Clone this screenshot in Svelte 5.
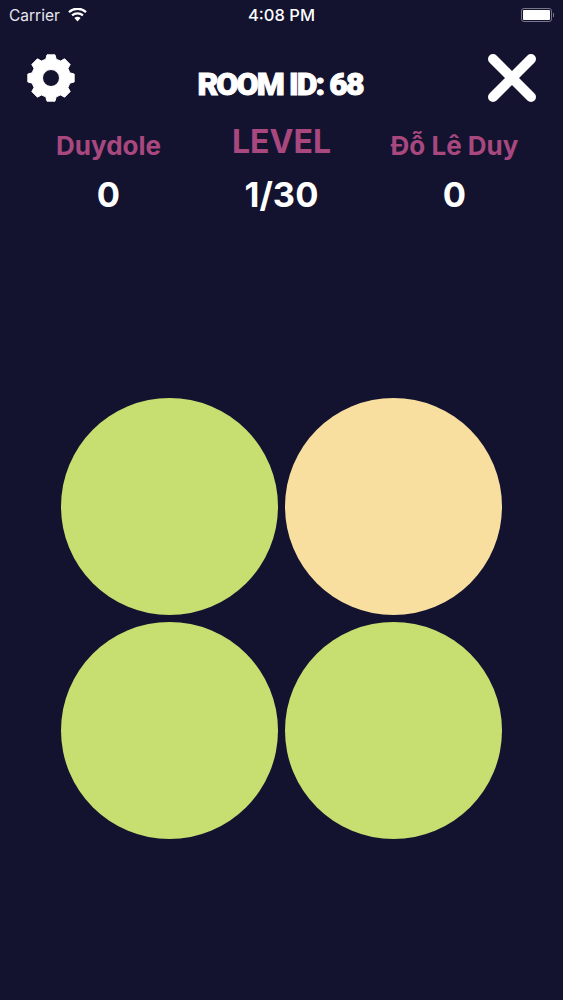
<script>
  const players = [
    { name: 'Duydole', score: 0 },
    { name: 'Đỗ Lê Duy', score: 0 }
  ];
  const tiles = [false, true, false, false];

  // 8 tooth gear outline, centred on 24,24
  function gearPath(teeth, outer, root) {
    const step = (Math.PI * 2) / teeth;
    const pts = [];
    for (let i = 0; i < teeth; i++) {
      const a = i * step - Math.PI / 2;
      for (const [r, off] of [[root, -0.27], [outer, -0.17], [outer, 0.17], [root, 0.27]]) {
        pts.push(`${(24 + r * Math.cos(a + off)).toFixed(2)} ${(24 + r * Math.sin(a + off)).toFixed(2)}`);
      }
    }
    return 'M' + pts.join('L') + 'Z';
  }

  const gear = gearPath(8, 23.5, 19.5) + 'M24 15.500a8.500 8.500 0 1 0 0 17 8.500 8.500 0 0 0 0-17z';
</script>

<div class="screen">
  <div class="status">
    <div class="carrier">
      <span>Carrier</span>
      <svg width="19" height="14" viewBox="0 0 19 14">
        <path d="M9.500 13.500 6.400 10a4.400 4.400 0 0 1 6.200 0z" fill="#fff" />
        <path d="M4.800 8.300a7 7 0 0 1 9.400 0l1.500-1.700a9.300 9.300 0 0 0-12.400 0z" fill="#fff" />
        <path d="M1.700 4.900a11.600 11.600 0 0 1 15.600 0l1.500-1.700a13.800 13.800 0 0 0-18.600 0z" fill="#fff" />
      </svg>
    </div>
    <span class="time">4:08 PM</span>
    <div class="battery">
      <div class="cell"></div>
      <div class="nub"></div>
    </div>
  </div>

  <header>
    <svg class="gear" width="48" height="48" viewBox="0 0 48 48">
      <path fill="#fff" fill-rule="evenodd" stroke="#fff" stroke-width="1" stroke-linejoin="round" d={gear} />
    </svg>
    <h1>ROOM ID: 68</h1>
    <svg class="close" width="48" height="48" viewBox="0 0 48 48">
      <path d="M5 5 43 43M43 5 5 43" stroke="#fff" stroke-width="10" stroke-linecap="round" />
    </svg>
  </header>

  <div class="stats">
    <div class="stat">
      <div class="name">{players[0].name}</div>
      <div class="value">{players[0].score}</div>
    </div>
    <div class="stat">
      <div class="name level">LEVEL</div>
      <div class="value">1/30</div>
    </div>
    <div class="stat">
      <div class="name">{players[1].name}</div>
      <div class="value">{players[1].score}</div>
    </div>
  </div>

  <div class="board">
    {#each tiles as lit}
      <div class="tile" class:lit></div>
    {/each}
  </div>
</div>

<style>
  :global(body) {
    margin: 0;
    background: #131330;
  }

  .screen {
    height: 1000px;
    background: #131330;
    color: #fff;
    font-family: Inter, "Liberation Sans", sans-serif;
    overflow: hidden;
  }

  .status {
    display: grid;
    grid-template-columns: 1fr auto 1fr;
    align-items: center;
    height: 30px;
    padding: 0 9px;
    font-size: 15.500px;
  }

  .carrier {
    display: flex;
    align-items: center;
    gap: 8px;
    color: #e8e8ee;
  }

  .time {
    font-size: 16.500px;
    font-weight: 500;
  }

  .battery {
    display: flex;
    align-items: center;
    justify-content: flex-end;
    gap: 1px;
  }

  .cell {
    width: 27px;
    height: 10px;
    border: 1px solid #77778a;
    border-radius: 3px;
    padding: 1px;
    background: #fff;
    background-clip: content-box;
  }

  .nub {
    width: 1px;
    height: 4px;
    background: #77778a;
  }

  header {
    display: flex;
    align-items: center;
    justify-content: space-between;
    padding: 23px 27px 0;
  }

  h1 {
    margin: 12px 0 0 -3px;
    font-family: Roboto, sans-serif;
    font-size: 32px;
    font-weight: 900;
    letter-spacing: -1.900px;
    -webkit-text-stroke: 1px #fff;
  }

  .stats {
    display: grid;
    grid-template-columns: repeat(3, 173px);
    padding: 0 22px;
    margin-top: 19px;
    text-align: center;
  }

  .name {
    height: 40px;
    padding-top: 8px;
    box-sizing: border-box;
    font-size: 26px;
    font-weight: 700;
    color: #a8487f;
    white-space: nowrap;
  }

  .name.level {
    padding-top: 0;
    font-size: 32px;
  }

  .value {
    margin-top: 12px;
    font-size: 34.500px;
    font-weight: 700;
  }

  .board {
    display: grid;
    grid-template-columns: repeat(2, 217px);
    justify-content: center;
    gap: 7px;
    margin-top: 183px;
  }

  .tile {
    height: 217px;
    border-radius: 50%;
    background: #c6df70;
  }

  .tile.lit {
    background: #f8dfa0;
  }
</style>
